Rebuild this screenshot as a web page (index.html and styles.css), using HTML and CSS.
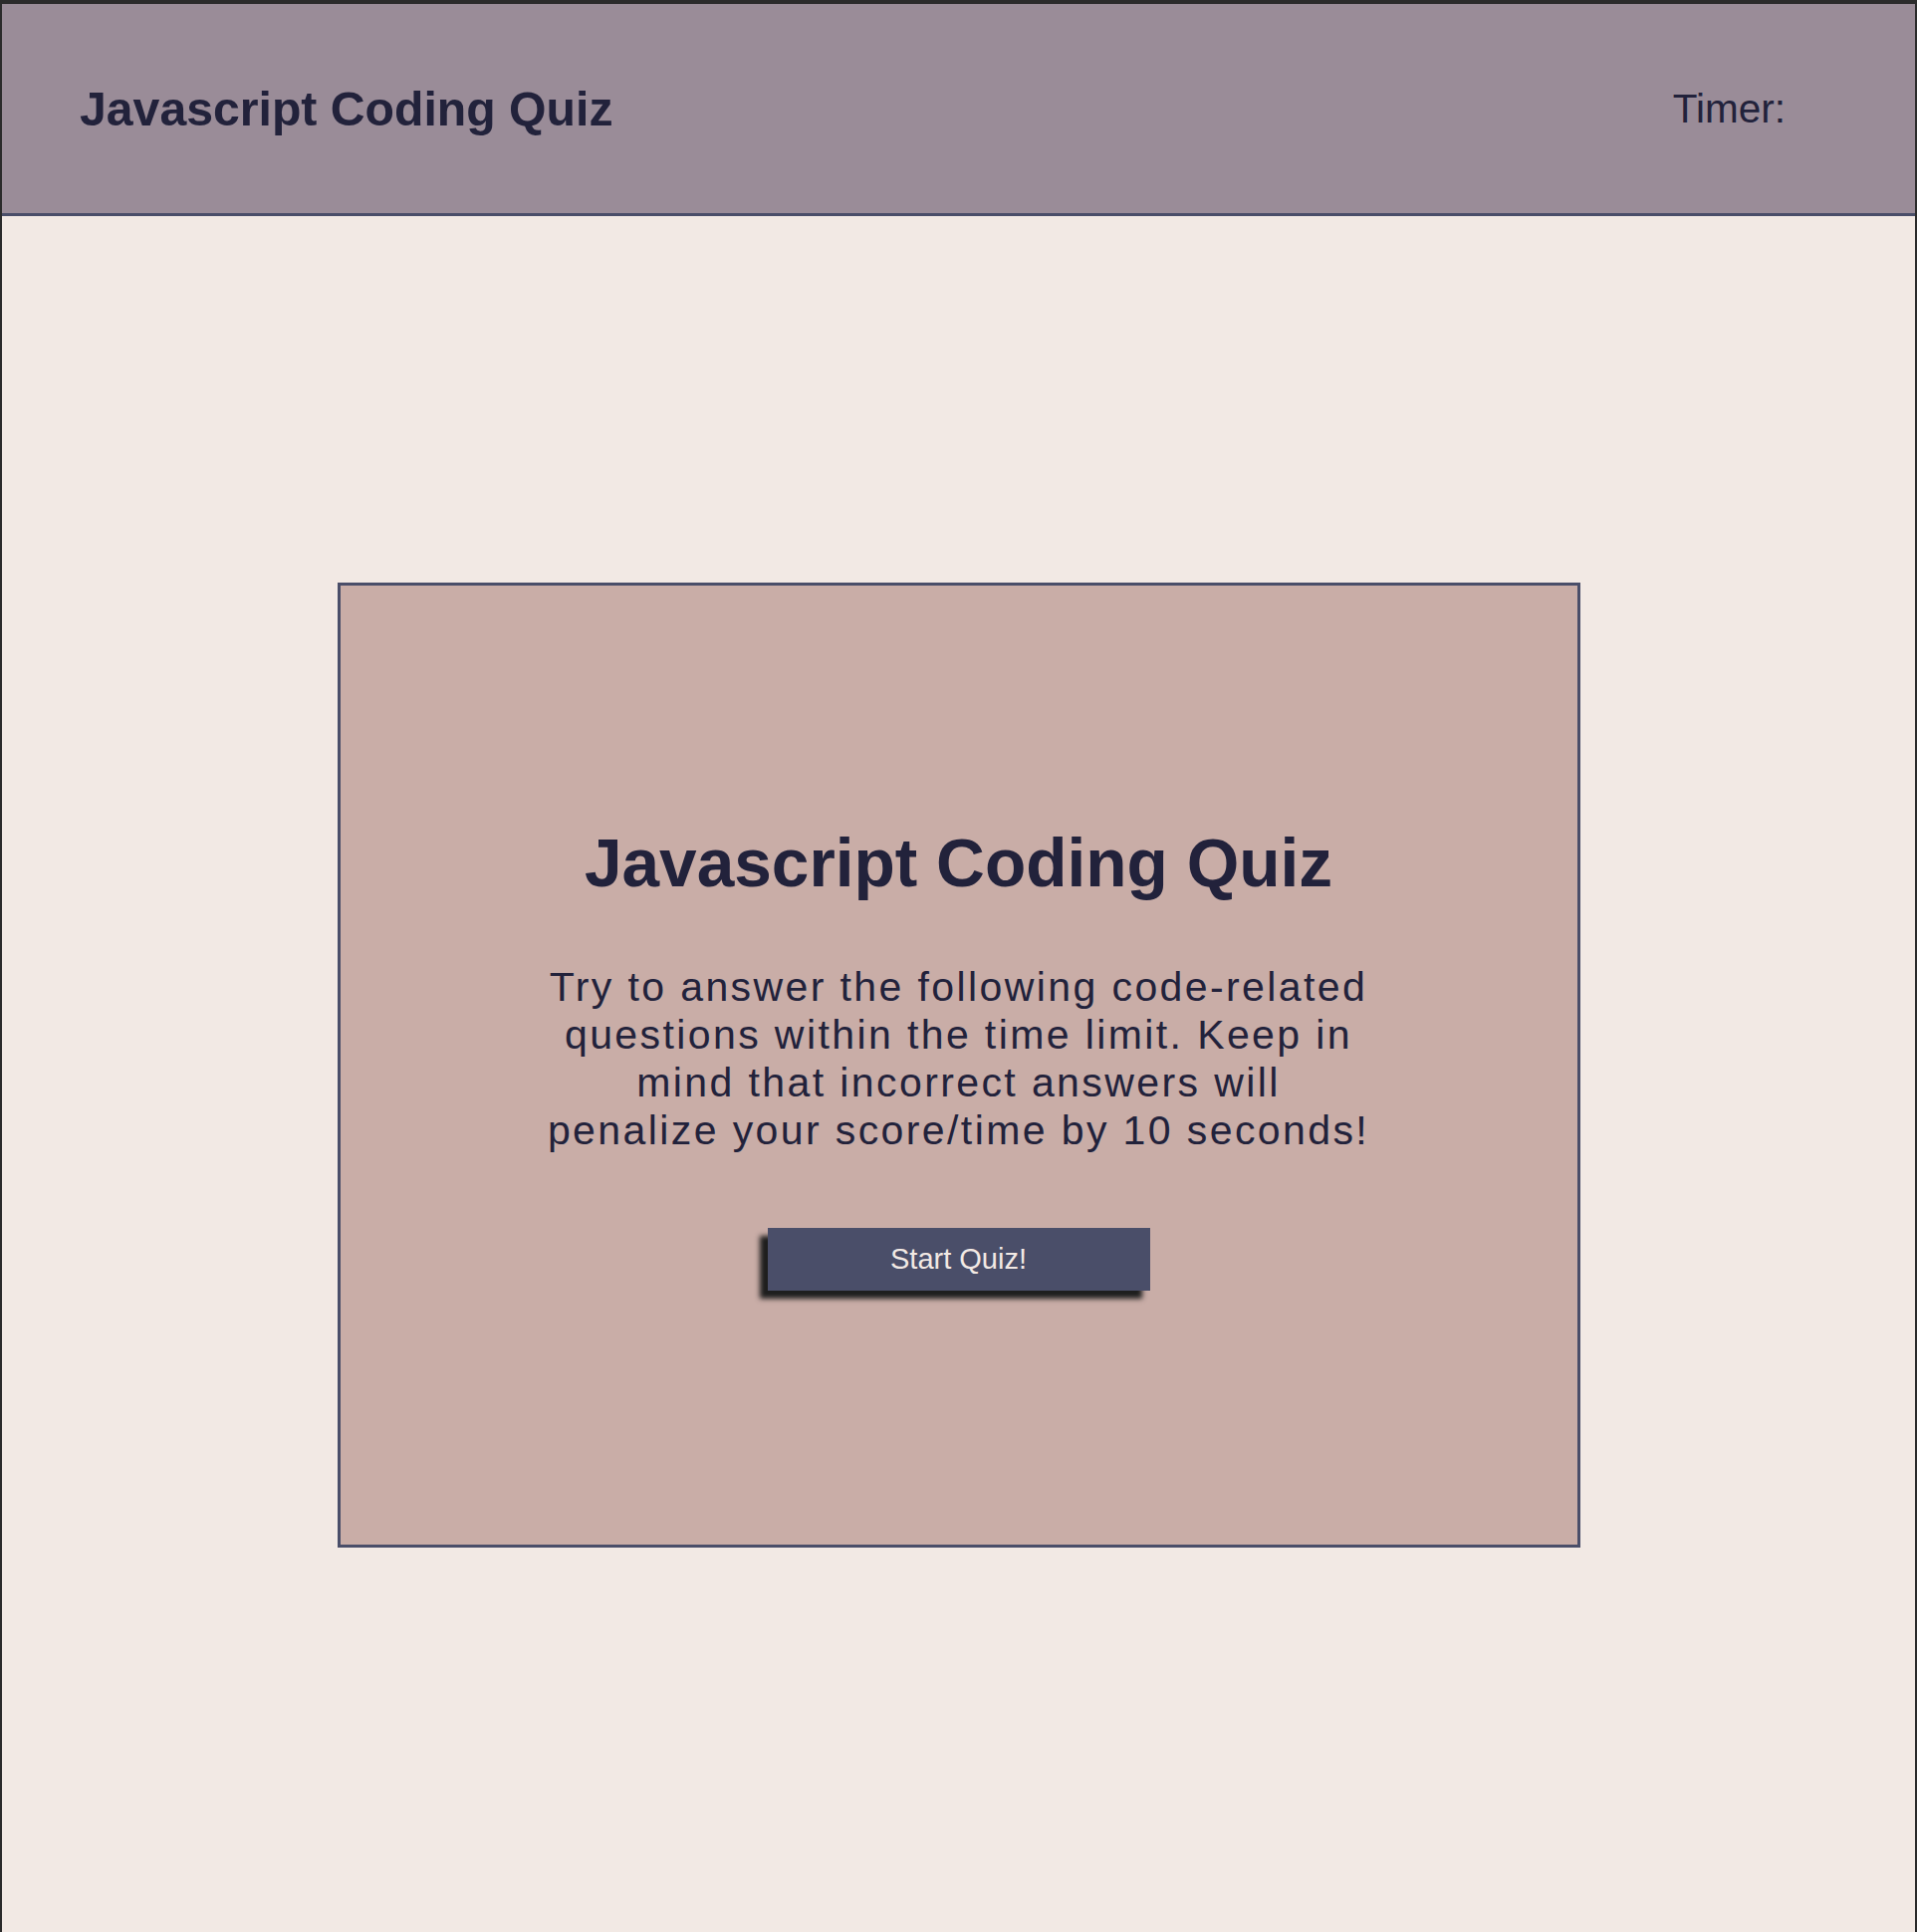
FILE: index.html
```html
<!DOCTYPE html>
<html lang="en">
<head>
<meta charset="utf-8">
<title>Javascript Coding Quiz</title>
<link rel="stylesheet" href="styles.css">
</head>
<body>
<header class="topbar">
  <h1 class="brand">Javascript Coding Quiz</h1>
  <div class="timer">Timer: <span class="time"></span></div>
</header>
<main class="stage">
  <section class="card">
    <h1 class="card-title">Javascript Coding Quiz</h1>
    <p class="intro">Try to answer the following code-related questions within the time limit. Keep in mind that incorrect answers will penalize your score/time by 10 seconds!</p>
    <button class="start" type="button">Start Quiz!</button>
  </section>
</main>
</body>
</html>
```
FILE: styles.css
```css
html {
  background: #2b2b2b;
}
body {
  margin: 4px 2px 0 2px;
  min-height: calc(100vh - 4px);
  background: #f2e9e4;
  font-family: "Liberation Sans", Arial, sans-serif;
  color: #22223b;
}
.topbar {
  display: flex;
  justify-content: space-between;
  align-items: center;
  height: 210px;
  padding: 0 130px 0 78px;
  background: #9a8c98;
  border-bottom: 3px solid #4a4e69;
}
.brand {
  margin: 0;
  font-size: 48.2px;
  font-weight: 700;
}
.timer {
  font-size: 40.5px;
}
.stage {
  padding-top: 368px;
}
.card {
  box-sizing: border-box;
  width: 1248px;
  height: 969px;
  margin: 0 auto;
  padding-top: 239px;
  background: #c9ada7;
  border: 3px solid #4a4e69;
  text-align: center;
}
.card-title {
  margin: 0;
  font-size: 67.6px;
  font-weight: 700;
  line-height: 80px;
}
.intro {
  width: 828px;
  margin: 60px auto 0;
  font-size: 41px;
  line-height: 48px;
  letter-spacing: 2.4px;
}
.start {
  display: block;
  width: 384px;
  height: 63px;
  margin: 74px auto 0;
  padding: 0;
  border: none;
  background: #4a4e69;
  color: #f2e9e4;
  font-family: "Liberation Sans", Arial, sans-serif;
  font-size: 29px;
  box-shadow: -8px 8px 5px #1e1e1e;
}
```
